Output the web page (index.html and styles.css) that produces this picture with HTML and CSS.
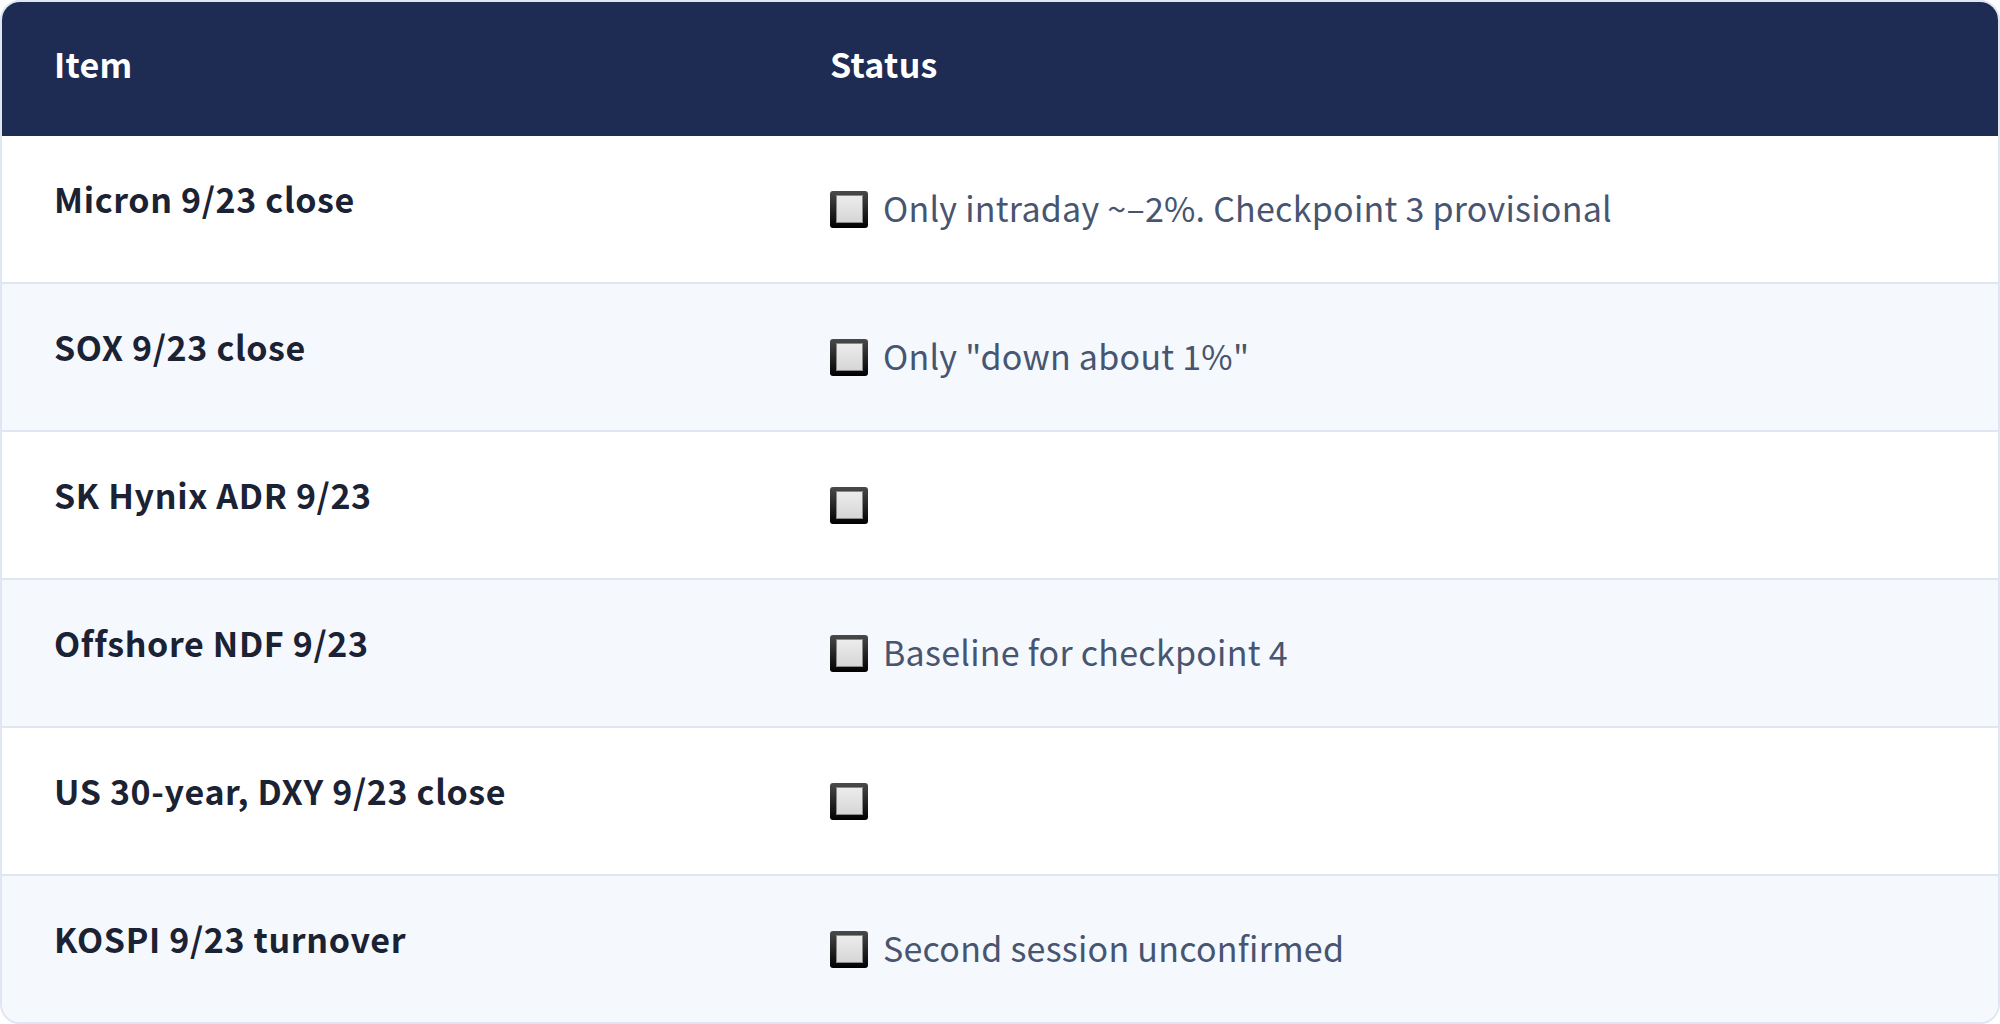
FILE: index.html
```html
<!DOCTYPE html>
<html lang="en">
<head>
<meta charset="utf-8">
<title>Checklist</title>
<link rel="stylesheet" href="styles.css">
</head>
<body>
<div class="table">
  <div class="row head">
    <div class="cell item">Item</div>
    <div class="cell status">Status</div>
  </div>
  <div class="row">
    <div class="cell item">Micron 9/23 close</div>
    <div class="cell status"><span class="box"></span><span class="txt">Only intraday ~–2%. Checkpoint 3 provisional</span></div>
  </div>
  <div class="row alt">
    <div class="cell item">SOX 9/23 close</div>
    <div class="cell status"><span class="box"></span><span class="txt">Only "down about 1%"</span></div>
  </div>
  <div class="row">
    <div class="cell item">SK Hynix ADR 9/23</div>
    <div class="cell status"><span class="box"></span></div>
  </div>
  <div class="row alt">
    <div class="cell item">Offshore NDF 9/23</div>
    <div class="cell status"><span class="box"></span><span class="txt">Baseline for checkpoint 4</span></div>
  </div>
  <div class="row">
    <div class="cell item">US 30-year, DXY 9/23 close</div>
    <div class="cell status"><span class="box"></span></div>
  </div>
  <div class="row alt last">
    <div class="cell item">KOSPI 9/23 turnover</div>
    <div class="cell status"><span class="box"></span><span class="txt">Second session unconfirmed</span></div>
  </div>
</div>
</body>
</html>
```
FILE: styles.css
```css
* { box-sizing: border-box; }
html, body { margin: 0; padding: 0; background: #ffffff; }
body {
  font-family: "Noto Sans CJK KR", "Noto Sans", sans-serif;
  width: 2000px;
  height: 1024px;
}
.table {
  width: 2000px;
  height: 1024px;
  border: 2px solid #dfe5f1;
  border-radius: 20px;
  overflow: hidden;
  display: flex;
  flex-direction: column;
}
.row {
  display: grid;
  grid-template-columns: 775px 1fr;
  height: 148px;
  border-bottom: 2px solid #dfe5f1;
  background: #ffffff;
}
.row.alt { background: #f5f8fd; }
.row.last { border-bottom: none; height: 146px; }
.row.head {
  height: 134px;
  background: #1e2c53;
  border-bottom: none;
}
.cell { padding: 0 53px; }
.item {
  padding-left: 52px;
  font-size: 34px;
  font-weight: 700;
  color: #1a2233;
  line-height: 50px;
  padding-top: 38px;
  letter-spacing: 0.65px;
}
.status {
  display: flex;
  align-items: center;
  font-size: 34px;
  color: #475570;
  line-height: 50px;
  letter-spacing: 0.25px;
}
.head .cell {
  color: #ffffff;
  font-weight: 700;
  font-size: 34px;
  letter-spacing: 0.3px;
  display: flex;
  align-items: center;
  padding-top: 0;
  padding-bottom: 10px;
}
.txt { margin-bottom: 3px; }
.box {
  flex: none;
  width: 38px;
  height: 37px;
  border-radius: 3px;
  background: linear-gradient(#4a4a4a, #000000);
  display: flex;
  align-items: center;
  justify-content: center;
  margin-right: 15px;
}
.box::before {
  content: "";
  width: 25px;
  height: 26px;
  background: linear-gradient(#ececec, #d6d6d6);
  border: 1px solid #8a8a8a;
}
```
